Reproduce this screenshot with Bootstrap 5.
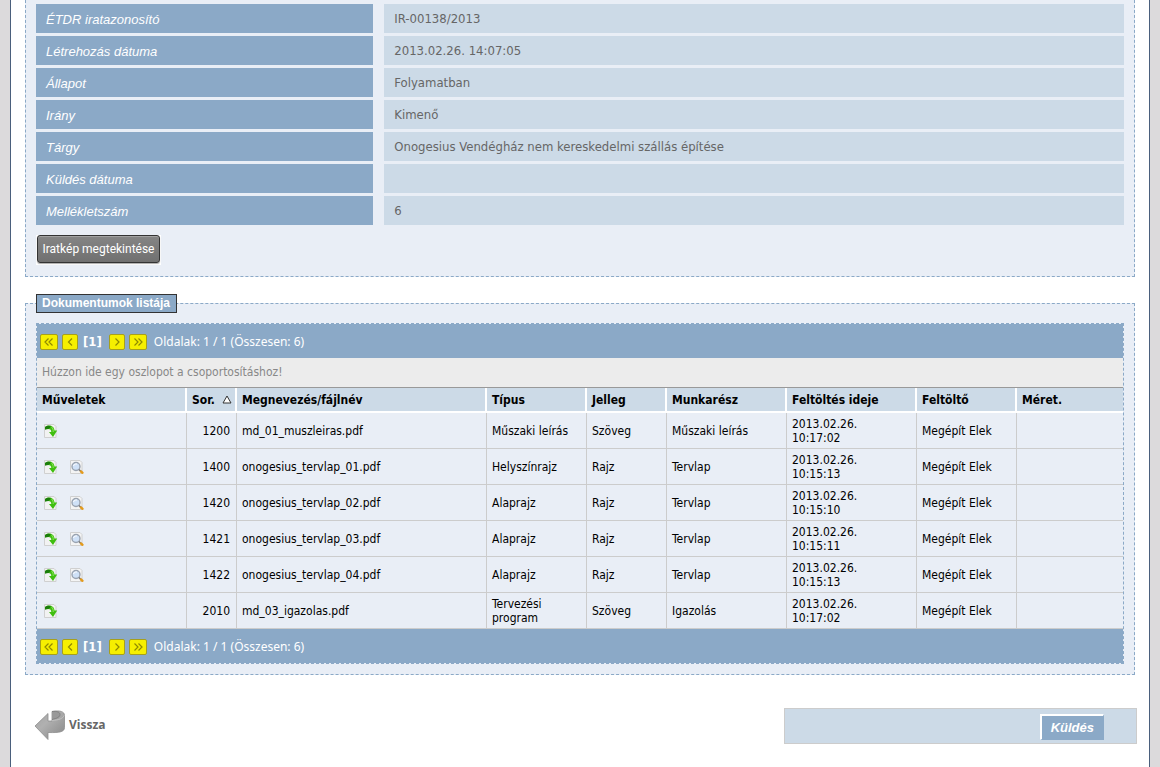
<!DOCTYPE html>
<html lang="hu">
<head>
<meta charset="utf-8">
<meta name="viewport" content="width=device-width, initial-scale=1">
<title>Irat adatai</title>
<link href="https://cdn.jsdelivr.net/npm/bootstrap@5.3.0/dist/css/bootstrap.min.css" rel="stylesheet">
<style>
  :root { --steel: #8ba9c7; --pale: #ccdae7; --panel: #e9eef6; --ink: #666; }
  body { background: #dcdadc; font-family: "DejaVu Sans Condensed", "DejaVu Sans", sans-serif; font-size: 12px; line-height: 14px; color: #000; }
  .page { background: #fff; border: solid #4a5f7c; border-width: 0 1px; margin: 0 10px; padding: 0 14px 22px; min-height: 100vh; }
  .panel { background: var(--panel); border: 1px dashed var(--steel); padding: 10px; }
  .panel-data { border-top: 0; padding: 4px 10px 11px; }
  .data-row { display: grid; grid-template-columns: 31% 1fr; column-gap: 11px; margin: 0 0 3px; }
  .data-row dt, .data-row dd { height: 29px; margin: 0; padding: 0 10px; line-height: 29px; }
  .data-row dt { background: var(--steel); color: #fff; font: italic 13px/31px "Liberation Sans", sans-serif; }
  .data-row dd { background: var(--pale); color: var(--ink); font-size: 13px; }
  .btn-frame { background: #fff; padding: 0 1px 2px; display: inline-block; margin-top: 7px; }
  .btn-view { border: 1px solid #333; border-radius: 3px; background: linear-gradient(#858585, #707070); box-shadow: inset 0 1px #a2a2a2, 0 1px 1px #aaa; color: #fff; font: 12px/26px Roboto, sans-serif; padding: 0 4px; min-width: 123px; display: block; white-space: nowrap; }
  .panel-docs { margin-top: 17px; padding-top: 10px; }
  .panel-docs legend { float: none; width: auto; margin: 0; padding: 0 6px 0 5px; border: 1px solid #333; background: var(--steel); color: #fff; font: bold 12px/17px "Liberation Sans", sans-serif; }
  .doc-grid { border: 1px dashed var(--steel); }
  .pager { background: var(--steel); background-clip: padding-box; color: #fff; height: 34px; padding: 2px 3px 0; }
  .pager-btn { width: 16px; height: 16px; padding: 0; border: 1px solid #a69f1c; border-radius: 2px; background: #f6ef00; display: flex; align-items: center; justify-content: center; }
  .pager-btn.wide { width: 18px; }
  .pager-btn svg { fill: none; stroke: #8f8a00; stroke-width: 1.2; }
  .page-no { margin: 0 7px 0 5px; font-size: 13px; }
  .page-info { font-family: "Noto Sans", sans-serif; margin-left: 7px; }
  .group-hint { background: #ececec; color: #888; height: 30px; padding: 0 5px; line-height: 29px; border-bottom: 1px solid #999; }
  .doc-table { width: 100%; table-layout: fixed; border-collapse: separate; border-spacing: 0; }
  .doc-table th { background: var(--pale); border: solid #fff; border-width: 0 2px 2px 0; height: 25px; padding: 0 5px; font-weight: bold; white-space: nowrap; }
  .doc-table th.w-no { padding-right: 3px; }
  .doc-table td { border: solid #ccc; border-width: 0 1px 1px 0; height: 36px; padding: 0 6px 0 5px; vertical-align: middle; }
  .doc-table th:last-child, .doc-table td:last-child { border-right: 0; }
  .w-ops { width: 150px; } .w-no { width: 50px; } .w-name { width: 250px; } .w-type { width: 100px; } .w-kind { width: 80px; }
  .w-part { width: 120px; } .w-time { width: 130px; } .w-user { width: 100px; }
  .ops { gap: 10px; padding-left: 1px; }
  .icon-btn { border: 0; background: none; padding: 0; width: 16px; height: 16px; display: block; }
  .icon-btn svg { display: block; }
  .footer-row { padding-top: 33px; }
  .back-link { color: var(--ink); font: bold 12px/16px "Open Sans", sans-serif; text-decoration: none; margin-left: 9px; padding-top: 1px; gap: 3px; }
  .send-bar { background: var(--pale); border: 1px solid #ccc; height: 36px; width: 353px; margin-right: -2px; padding: 2px 32px 0; }
  .btn-send { background: var(--steel); border: solid; border-width: 2px 1px 1px 2px; border-color: #fff var(--steel) var(--steel) #fff; color: #fff; font: italic bold 13px/23px "Liberation Sans", sans-serif; padding: 0 9px; }
</style>
</head>
<body>
<svg width="0" height="0" class="position-absolute" aria-hidden="true">
  <defs>
    <linearGradient id="metal" x1="0" y1="0" x2="1" y2="1"><stop offset="0" stop-color="#a4a4a4"/><stop offset=".4" stop-color="#b0b0b0"/><stop offset="1" stop-color="#868686"/></linearGradient>
    <symbol id="i-open" viewBox="0 0 16 16">
      <path d="M1.500 1.500h9.500l2 2v11h-11.500z" fill="#f2f2f2" stroke="#d0d0d0"/>
      <path d="M2 4C4.500 1.600 11 1.500 11.500 7.500h2.700l-4.200 6.500L6 9h2.300C8.300 6 6.300 5.700 2 6.500z" fill="#3fbe10"/>
      <path d="M2 4c2.500-2 5-1.300 6-.2L5.500 6 2 6.500z" fill="#1b7d0b"/>
      <path d="M8.500 4c1.500 1 1.700 3 1.700 5" stroke="#8be85a" fill="none"/>
    </symbol>
    <symbol id="i-view" viewBox="0 0 16 16">
      <path d="M1.500 1.500h9.500l2 2v11h-11.500z" fill="#f4f4f4" stroke="#d0d0d0"/>
      <circle cx="7" cy="7.500" r="4" fill="#cfe1f7" stroke="#9aa3b0" stroke-width="1.400"/>
      <path d="M4.500 7c.5-1.700 2-2.300 3.500-2" stroke="#fff" fill="none"/>
      <path d="M10 10.500l2 2" stroke="#777" stroke-width="1.600"/>
      <path d="M12 12.500l1.500 1.300" stroke="#e39a1c" stroke-width="2.400" stroke-linecap="round"/>
    </symbol>
    <symbol id="i-first" viewBox="0 0 12 10"><path d="M5.500 1.500L2 5l3.500 3.500M9.500 1.500L6 5l3.500 3.500"/></symbol>
    <symbol id="i-prev" viewBox="0 0 12 10"><path d="M8 1.500L4.500 5 8 8.500"/></symbol>
    <symbol id="i-next" viewBox="0 0 12 10"><path d="M4.500 1.500L8 5 4.500 8.500"/></symbol>
    <symbol id="i-last" viewBox="0 0 12 10"><path d="M2.500 1.500L6 5 2.500 8.500M6.500 1.500L10 5 6.500 8.500"/></symbol>
  </defs>
</svg>
<main class="page">
  <section class="panel panel-data">
    <dl class="m-0">
      <div class="data-row"><dt>ÉTDR iratazonosító</dt><dd>IR-00138/2013</dd></div>
      <div class="data-row"><dt>Létrehozás dátuma</dt><dd>2013.02.26. 14:07:05</dd></div>
      <div class="data-row"><dt>Állapot</dt><dd>Folyamatban</dd></div>
      <div class="data-row"><dt>Irány</dt><dd>Kimenő</dd></div>
      <div class="data-row"><dt>Tárgy</dt><dd>Onogesius Vendégház nem kereskedelmi szállás építése</dd></div>
      <div class="data-row"><dt>Küldés dátuma</dt><dd></dd></div>
      <div class="data-row"><dt>Mellékletszám</dt><dd>6</dd></div>
    </dl>
    <div class="d-flex"><div class="btn-frame"><button type="button" class="btn-view">Iratkép megtekintése</button></div></div>
  </section>

  <fieldset class="panel panel-docs">
    <legend>Dokumentumok listája</legend>
    <div class="doc-grid">
      <nav class="pager d-flex align-items-center" aria-label="Lapozó">
        <button type="button" class="pager-btn wide" aria-label="Első"><svg width="12" height="10"><use href="#i-first"/></svg></button>
        <button type="button" class="pager-btn ms-1" aria-label="Előző"><svg width="12" height="10"><use href="#i-prev"/></svg></button>
        <b class="page-no">[1]</b>
        <button type="button" class="pager-btn" aria-label="Következő"><svg width="12" height="10"><use href="#i-next"/></svg></button>
        <button type="button" class="pager-btn wide ms-1" aria-label="Utolsó"><svg width="12" height="10"><use href="#i-last"/></svg></button>
        <span class="page-info">Oldalak: 1 / 1 (Összesen: 6)</span>
      </nav>
      <div class="group-hint">Húzzon ide egy oszlopot a csoportosításhoz!</div>
      <table class="doc-table">
        <thead>
          <tr><th class="w-ops">Műveletek</th><th class="w-no"><span class="d-flex align-items-center justify-content-between">Sor. <svg width="10" height="9" viewBox="0 0 10 9"><path d="M5 1L9 8H1z" fill="#fff" stroke="#333"/></svg></span></th><th class="w-name">Megnevezés/fájlnév</th><th class="w-type">Típus</th><th class="w-kind">Jelleg</th><th class="w-part">Munkarész</th><th class="w-time">Feltöltés ideje</th><th class="w-user">Feltöltő</th><th>Méret.</th></tr>
        </thead>
        <tbody id="docs"></tbody>
      </table>
      <nav class="pager d-flex align-items-center" aria-label="Lapozó alul">
        <button type="button" class="pager-btn wide" aria-label="Első"><svg width="12" height="10"><use href="#i-first"/></svg></button>
        <button type="button" class="pager-btn ms-1" aria-label="Előző"><svg width="12" height="10"><use href="#i-prev"/></svg></button>
        <b class="page-no">[1]</b>
        <button type="button" class="pager-btn" aria-label="Következő"><svg width="12" height="10"><use href="#i-next"/></svg></button>
        <button type="button" class="pager-btn wide ms-1" aria-label="Utolsó"><svg width="12" height="10"><use href="#i-last"/></svg></button>
        <span class="page-info">Oldalak: 1 / 1 (Összesen: 6)</span>
      </nav>
    </div>
  </fieldset>

  <div class="d-flex justify-content-between align-items-start footer-row">
    <a href="#" class="back-link d-flex align-items-center">
      <svg width="32" height="32" viewBox="0 0 32 32" aria-hidden="true">
        <path d="M18 2.500c8-1.500 12.500 0 12.500 4v12c0 4-4 5.500-16.500 5v7L1 17 14 4.500v7.500h4z" fill="url(#metal)" stroke="#8d8d8d" stroke-width=".8"/>
        <path d="M18 2.500c5-.5 8 .5 8 3s-3 4-8 5z" fill="#999"/>
        <path d="M18 2.500c5-.5 8 .5 8 3s-3 4-8 5" fill="none" stroke="#777" stroke-width=".8"/>
        <path d="M18 11.500c7-.5 11-2 12-5" fill="none" stroke="#c6c6c6" stroke-width=".8"/>
      </svg>
      <span>Vissza</span>
    </a>
    <div class="send-bar d-flex align-items-center justify-content-end"><button type="button" class="btn-send">Küldés</button></div>
  </div>
</main>
<script src="https://cdn.jsdelivr.net/npm/bootstrap@5.3.0/dist/js/bootstrap.bundle.min.js"></script>
<script>
  const docs = [
    ['1200', 'md_01_muszleiras.pdf', 'Műszaki leírás', 'Szöveg', 'Műszaki leírás', '10:17:02', false],
    ['1400', 'onogesius_tervlap_01.pdf', 'Helyszínrajz', 'Rajz', 'Tervlap', '10:15:13', true],
    ['1420', 'onogesius_tervlap_02.pdf', 'Alaprajz', 'Rajz', 'Tervlap', '10:15:10', true],
    ['1421', 'onogesius_tervlap_03.pdf', 'Alaprajz', 'Rajz', 'Tervlap', '10:15:11', true],
    ['1422', 'onogesius_tervlap_04.pdf', 'Alaprajz', 'Rajz', 'Tervlap', '10:15:13', true],
    ['2010', 'md_03_igazolas.pdf', 'Tervezési program', 'Szöveg', 'Igazolás', '10:17:02', false]
  ];
  const icon = (id, label) => `<button type="button" class="icon-btn" aria-label="${label}"><svg width="16" height="16"><use href="#${id}"/></svg></button>`;
  document.getElementById('docs').innerHTML = docs.map(([no, name, type, kind, part, time, view]) => `
    <tr><td><div class="d-flex ops">${icon('i-open', 'Megnyitás')}${view ? icon('i-view', 'Megtekintés') : ''}</div></td>
    <td class="text-end">${no}</td><td>${name}</td><td>${type}</td><td>${kind}</td><td>${part}</td>
    <td>2013.02.26.<br>${time}</td><td>Megépít Elek</td><td></td></tr>`).join('');
</script>
</body>
</html>
